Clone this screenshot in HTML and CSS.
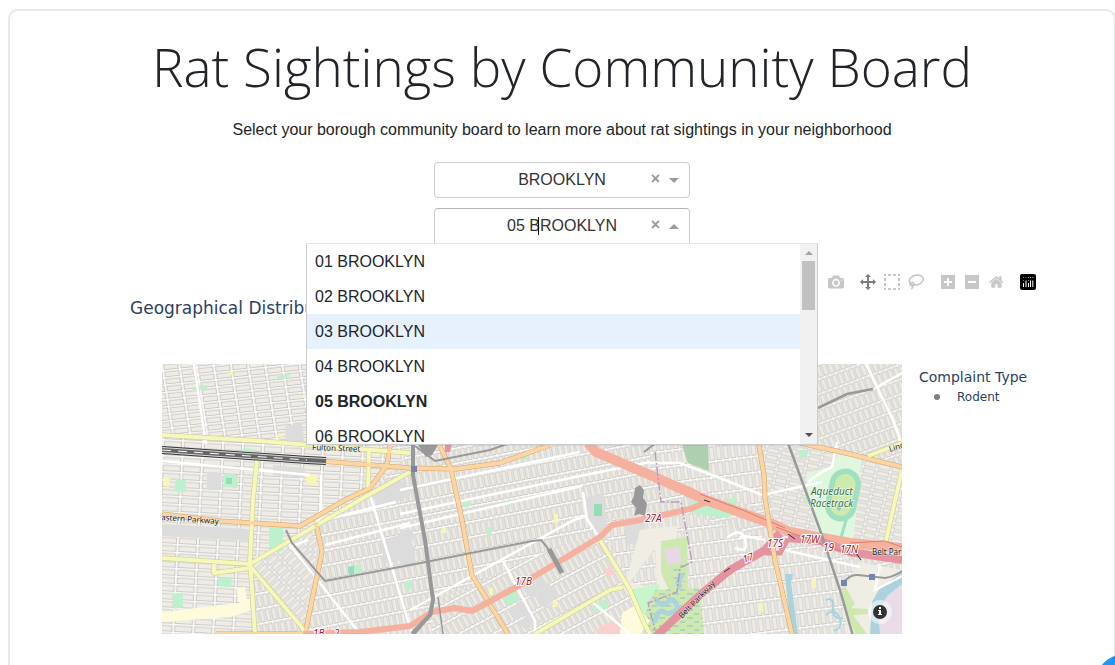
FILE: index.html
```html
<!DOCTYPE html>
<html lang="en">
<head>
<meta charset="utf-8">
<title>Rat Sightings by Community Board</title>
<link rel="stylesheet" href="styles.css">
</head>
<body>
<main class="card">
  <h1 class="title">Rat Sightings by Community Board</h1>
  <p class="intro">Select your borough community board to learn more about rat sightings in your neighborhood</p>

  <form class="filters">
    <div class="field">
      <select class="control" aria-label="Borough"><option>BROOKLYN</option></select>
      <button class="clear" type="button" aria-label="Clear borough">×</button>
      <span class="arrow arrow-down"></span>
    </div>
    <div class="field field-open">
      <input class="control" type="text" role="combobox" aria-expanded="true" aria-controls="boards" aria-label="Community board" value="05 BROOKLYN">
      <span class="caret"></span>
      <button class="clear" type="button" aria-label="Clear community board">×</button>
      <span class="arrow arrow-up"></span>
      <div class="menu">
        <ul class="options" id="boards" role="listbox">
          <li class="option" role="option">01 BROOKLYN</li>
          <li class="option" role="option">02 BROOKLYN</li>
          <li class="option option-focused" role="option">03 BROOKLYN</li>
          <li class="option" role="option">04 BROOKLYN</li>
          <li class="option option-selected" role="option" aria-selected="true">05 BROOKLYN</li>
          <li class="option" role="option">06 BROOKLYN</li>
        </ul>
        <div class="scrollbar">
          <span class="scroll-up"></span>
          <span class="thumb"></span>
          <span class="scroll-down"></span>
        </div>
      </div>
    </div>
  </form>

  <section class="chart">
    <div class="modebar">
      <div class="group">
        <button class="tool" aria-label="Download plot"><svg viewBox="0 0 1000 1000"><path transform="matrix(1 0 0 -1 0 850)" d="m500 450c-83 0-150-67-150-150 0-83 67-150 150-150 83 0 150 67 150 150 0 83-67 150-150 150z m400 150h-120c-16 0-34 13-39 29l-31 93c-6 15-23 28-40 28h-340c-16 0-34-13-39-28l-31-94c-6-15-23-28-40-28h-120c-55 0-100-45-100-100v-450c0-55 45-100 100-100h800c55 0 100 45 100 100v450c0 55-45 100-100 100z m-400-550c-138 0-250 112-250 250 0 138 112 250 250 250 138 0 250-112 250-250 0-138-112-250-250-250z m365 380c-19 0-35 16-35 35 0 19 16 35 35 35 19 0 35-16 35-35 0-19-16-35-35-35z"/></svg></button>
      </div>
      <div class="group">
        <button class="tool tool-active" aria-label="Pan"><svg viewBox="0 0 1000 1000"><path transform="matrix(1 0 0 -1 0 850)" d="m1000 350l-187 188 0-125-250 0 0 250 125 0-188 187-187-187 125 0 0-250-250 0 0 125-188-188 186-187 0 125 252 0 0-250-125 0 187-188 188 188-125 0 0 250 250 0 0-126 187 188z"/></svg></button>
        <button class="tool" aria-label="Box select"><svg viewBox="0 0 16 16"><path d="M0 0h2v2H0zM4 0h3v2H4zM9 0h3v2H9zM14 0h2v2h-2zM0 4h2v3H0zM14 4h2v3h-2zM0 9h2v3H0zM14 9h2v3h-2zM0 14h2v2H0zM4 14h3v2H4zM9 14h3v2H9zM14 14h2v2h-2z"/></svg></button>
        <button class="tool" aria-label="Lasso select"><svg viewBox="0 0 16 16"><g fill="none" stroke="#c7c7c7" stroke-width="1.6"><ellipse cx="8.300" cy="6" rx="7" ry="4.900" transform="rotate(-14 8.300 6)"/><ellipse cx="4" cy="10" rx="2" ry="1.700"/><path d="M4.700 11.500C5.300 13 4.500 14 3.300 14.800"/></g></svg></button>
      </div>
      <div class="group">
        <button class="tool" aria-label="Zoom in"><svg viewBox="0 0 875 1000"><path transform="matrix(1 0 0 -1 0 850)" d="m1 787l0-875 875 0 0 875-875 0z m687-500l-187 0 0-187-125 0 0 187-188 0 0 125 188 0 0 187 125 0 0-187 187 0 0-125z"/></svg></button>
        <button class="tool" aria-label="Zoom out"><svg viewBox="0 0 875 1000"><path transform="matrix(1 0 0 -1 0 850)" d="m0 788l0-876 875 0 0 876-875 0z m688-500l-500 0 0 125 500 0 0-125z"/></svg></button>
        <button class="tool" aria-label="Reset view"><svg viewBox="0 0 928 1000"><path transform="matrix(1 0 0 -1 0 850)" d="m786 296v-267q0-15-11-26t-25-10h-214v214h-143v-214h-214q-15 0-25 10t-11 26v267q0 1 0 2t0 2l321 264 321-264q1-1 1-4z m124 39l-34-41q-5-5-12-6h-2q-7 0-12 3l-386 322-386-322q-7-4-13-4-7 2-12 7l-35 41q-4 5-3 13t6 12l401 334q18 15 42 15t43-15l136-114v109q0 8 5 13t13 5h107q8 0 13-5t5-13v-227l122-102q5-5 6-12t-4-13z"/></svg></button>
      </div>
      <div class="group">
        <a class="tool" href="#" aria-label="Plotly"><svg viewBox="0 0 16 16"><rect width="16" height="16" rx="2" fill="#000"/><path d="M3 9h1v4H3zM5.500 6.500h1V13h-1zM8 9h1v4H8zM10 6.500h1V13h-1zM12.300 6.500h1V13h-1z" fill="#fff"/><path d="M3 3h1v1H3zM3 6h1v1H3zM5.500 3h1v1h-1z" fill="#ef4a81"/><path d="M8 3h1v1H8zM8 6h1v1H8z" fill="#b573b5"/><path d="M10 3h1v1h-1zM12.300 3h1v1h-1z" fill="#67c9dc"/></svg></a>
      </div>
    </div>
    <h2 class="chart-title">Geographical Distribution</h2>
    <div class="plot">
      <div class="map">
      <svg class="map-canvas" viewBox="162 364 740 270" role="img" aria-label="Street map of Brooklyn and Queens">
        <defs>
          <pattern id="gA" width="17" height="7.200" patternUnits="userSpaceOnUse" patternTransform="translate(162 364) rotate(-6) skewX(3)"><rect width="17" height="8" fill="#fff"/><rect x="1.200" y="1" width="14.500" height="5" class="block"/></pattern>
          <pattern id="gB" width="20" height="8" patternUnits="userSpaceOnUse" patternTransform="translate(162 464) rotate(3)"><rect width="20" height="8" fill="#fff"/><rect x="1.200" y="1" width="17.500" height="5.700" class="block"/></pattern>
          <pattern id="gC" width="6" height="15" patternUnits="userSpaceOnUse" patternTransform="translate(400 490) rotate(-11)"><rect width="6" height="15" fill="#fff"/><rect x=".8" y="1" width="4.200" height="12.500" class="block"/></pattern>
          <pattern id="gD" width="14" height="7" patternUnits="userSpaceOnUse" patternTransform="translate(250 566) rotate(-42)"><rect width="14" height="7" fill="#fff"/><rect x="1" y="1" width="12" height="5" class="block"/></pattern>
          <pattern id="gE" width="6" height="16" patternUnits="userSpaceOnUse" patternTransform="translate(470 610) rotate(-28)"><rect width="6" height="16" fill="#fff"/><rect x=".8" y="1" width="4.200" height="13.500" class="block"/></pattern>
          <pattern id="gF" width="6" height="14" patternUnits="userSpaceOnUse" patternTransform="translate(820 364) rotate(-20)"><rect width="6" height="14" fill="#fff"/><rect x=".8" y="1" width="4.200" height="11.800" class="block"/></pattern>
          <pattern id="gG" width="7" height="16" patternUnits="userSpaceOnUse" patternTransform="translate(700 560) rotate(-7)"><rect width="7" height="16" fill="#fff"/><rect x="1" y="1" width="5" height="13.500" class="block"/></pattern>
          <pattern id="gH" width="14" height="7" patternUnits="userSpaceOnUse" patternTransform="translate(860 480) rotate(12)"><rect width="14" height="7" fill="#fff"/><rect x="1" y="1" width="12" height="5" class="block"/></pattern>
          <pattern id="marsh" width="14" height="8" patternUnits="userSpaceOnUse"><rect width="14" height="8" fill="#cfe8b0"/><path d="M1 2h6M8 6h5" stroke="#7eb6ce" stroke-width=".8"/></pattern>
        </defs>

        <g class="streets">
          <rect x="162" y="364" width="740" height="270" fill="url(#gC)"/>
          <path d="M162 364H420V452L162 435Z" fill="url(#gA)"/>
          <path d="M162 435L410 453 365 497 250 565 255 634H162Z" fill="url(#gB)"/>
          <path d="M250 566L310 532 322 552 305 634Z" fill="url(#gD)"/>
          <path d="M438 600L560 545 600 535 635 590 650 634H430Z" fill="url(#gE)"/>
          <path d="M600 520L690 508 690 634H650L630 590Z" fill="url(#gG)"/>
          <path d="M650 445H760L765 510 650 475Z" fill="url(#gG)"/>
          <path d="M690 515L775 540 858 560V634H660Z" fill="url(#gG)"/>
          <path d="M780 364H902V470L760 430Z" fill="url(#gF)"/>
          <path d="M760 445L815 444 902 467V550L776 525Z" fill="url(#gH)"/>
        </g>

        <g class="areas">
          <path class="grey" d="M285 426l17-3 2 19-18-1zM273 465l32 3-1 10-31-3zM207 472l15 1-1 17-14-1zM162 524l86 5v12l-86-5zM372 494l28-14 10 8v8l-32 14zM381 540l30-8v26l-27 6zM400 530h13v11h-13zM400 546h15v19h-15zM583 498l20-5 5 37-10 3-12-19zM518 584l20-10 12 12-20 11zM535 597l14-11 12 10-17 12zM508 612l12-12 13 7-15 13zM518 623l12-11 12 10-16 8zM624 520l20-3v24l-18 4z"/>
          <path fill="#f0ede5" d="M640 530l37-4v65l-17 25-35-30zM655 548l-25 34 28 8z"/>
          <path fill="#fdfbdc" d="M162 612l76-9 12-4v12l-20 6-68 5zM237 588l8-1 2 14-9 1z"/>
          <path class="green" d="M269 527h14v24l-14 2zM243 448l14 2-2 4-13-2zM224 474l14 1-1 13-14-1zM193 387l14-2v4l-14 2zM277 376l12-2v3l-12 2zM176 479l10 1v12l-12-1zM218 578l14-1-1 10-13-1zM172 594l11-1v14l-9 2zM350 566l11-2 2 8-12 2zM502 596l15-6 2 10-12 6zM462 503l6-2 2 5-6 2zM505 502h5v6h-5zM523 453h5v7h-5zM592 605l14-6 3 9-13 5zM487 528l4-1v9h-4zM799 450h8v8h-8zM728 500l8-5v12h-8zM690 495l20 5 30 13-12 5-34-4zM406 581h6v8h-6zM803 497h6v5h-6z"/>
          <path fill="#aecfb0" d="M682 445h26l1 26-21-8z"/>
          <path fill="#fad0cc" d="M604 570l9-4 1 8-7 3zM600 626l20-7v15h-24zM192 371l5-1v3h-5z"/>
          <path fill="#f8f5b8" d="M306 474l12 1-2 11-10-4zM163 477l7 1-1 9-6-1zM227 373l6-1v3h-6zM275 435l8-1v3h-8zM554 514h4v9h-4zM489 588h4v7h-4zM553 600h4v7h-4zM442 528h4v5h-4zM302 395h6v3h-6zM812 579h4v9h-4zM759 603h4v9h-4z"/>
          <path fill="#93ddb8" d="M594 504h8v12h-8zM348 567l6-1v8l-5 1zM226 478h6v6h-6z"/>
          <path fill="#e0f7df" d="M806 473l26-6 6-13 24 4-9 86h-16l-17-6-11-32z"/>
          <path fill="#c9f5cd" d="M629 590l30-6 6 50h-14z"/>
          <path fill="#cfe8b0" d="M661 541l26-4 1 55-17 3-10-22z"/>
          <path fill="#e8d8e6" d="M664 550l14-4 4 16-14 4zM650 597l8 3-5 9-6-4z"/>
          <path fill="url(#marsh)" d="M655 590l45-2 4 46h-54l-5-20zM672 565l14-3v20h-12z"/>
          <path d="M656 600q6 8 12 2t10 6q-8 8-14 4t-9 10M683 574q-8 8-2 14" fill="none" stroke="#abd3de" stroke-width="5"/>
          <path fill="#fdfbdc" d="M622 613l14-8 14 16-10 13h-20z"/>
          <path fill="#f0ede5" d="M858 562l44 8v64h-54l-5-40z"/>
          <path fill="#cfe8b0" d="M845 586l10 18-4 4 17 1v5l-15 1 14 19h-12l-14-40z"/>
          <path fill="#abd3de" d="M902 572l-22 16-8 14-2 32h32z"/>
          <path fill="#e8dce8" d="M902 584l-15 12-9 17 2 21h22z"/>
          <path d="M785 574h8l-2 8 7 52h-7z" fill="#abd3de"/>
          <path d="M826 600q8-4 7 8t10 10M826 615q8-8 13 2t-5 14" fill="none" stroke="#abd3de" stroke-width="2"/>
          <rect x="830" y="471" width="26" height="48" rx="13" transform="rotate(12 843 495)" fill="#cfeaae" stroke="#a0dfc0" stroke-width="5.500"/>
          <path d="M847 517l-7 24" stroke="#a0dfc0" stroke-width="3"/>
          <ellipse cx="839" cy="508" rx="2" ry="3" fill="#9cc6cb"/>
          <path fill="#999" d="M635 488l5-3 4 5-1 8 4 5-2 13-6-2-5 2 2-8-5-6 3-6zM418 445h20l-6 10-6 2z"/>
        </g>

        <g class="minor">
          <path d="M162 461l148 14M194 364l12 80M318 364v80M321 475v44M400 490l180-38M400 514l180-38 70-14M400 528l182-42M583 492l4 27 13 20M410 610l100-55 64-35 12-4M503 561l32 60v13M286 540l74 94M292 546l16-6M325 545l85-22M370 495l42 139M316 522l80-20M650 463l30 0 40 15 42 17 60-13M808 482q12-10 24-15l5-25M866 364l27 56 9 25M875 388l27-15M727 538q14-12 18 2t-10 8M752 538q-10-4-12 0M765 540l-20-4M880 566l-5 24 27-14M780 549l80 18M590 600l40 34"/>
        </g>

        <g class="casing">
          <path class="yellow-edge" d="M162 435L260 441 410 453M257 460L253 500 250 560 255 634M410 472L365 497 250 564 162 558M214 564v9l36-5M250 566L300 625 306 634M369 450L368 490M600 540L630 590 645 625 650 634M535 634L610 590 623 587M868 456L902 443M902 470L885 545"/>
          <path class="orange-edge" d="M162 514L220 521 300 526 345 500 370 488 387 465 390 446M307 460L410 468 455 469 500 463 550 445M316 523L322 552 305 634M437 440L451 469 462 520 472 575 508 634M758 440L764 475 765 498 775 560 792 634M800 443L850 454 902 467M216 634h92"/>
        </g>
        <g class="roads">
          <path class="yellow" d="M162 435L260 441 410 453M257 460L253 500 250 560 255 634M410 472L365 497 250 564 162 558M214 564v9l36-5M250 566L300 625 306 634M369 450L368 490M600 540L630 590 645 625 650 634M535 634L610 590 623 587M868 456L902 443M902 470L885 545"/>
          <path class="orange" d="M162 514L220 521 300 526 345 500 370 488 387 465 390 446M307 460L410 468 455 469 500 463 550 445M316 523L322 552 305 634M437 440L451 469 462 520 472 575 508 634M800 443L850 454 902 467M216 634h92"/>
          <path d="M445 444h7l-2 8h-5z" fill="#e592a1"/>
          <path d="M303 634L360 632 410 626 432 612 455 608 472 611 515 588 600 537 612 525 640 520 690 509 712 500" class="salmon"/>
          <path d="M588 443L596 452 650 475 706 500 770 523 790 532 850 543 902 548" class="salmon wide"/>
          <path d="M640 470L690 490 708 500" class="salmon"/>
          <path d="M654 638L700 595 730 570 765 550 780 533" class="pink"/>
          <path d="M788 538L820 541 850 552 902 560" class="pink"/>
          <path d="M765 553l15 0 8-14" class="pink thin"/>
          <path d="M776 527l40 15 36 13M850 543l35-2 17 6M700 494l45 17 40 17" fill="none" stroke="#e07d69"/>
          <path d="M758 440L764 475 765 498 775 560 792 634" class="orange"/>
          <path d="M704 500l6 2M788 534l7 5M856 553l5 7M724 572l6-4" stroke="#333"/>
        </g>

        <g class="rails">
          <path d="M162 450L307 460 326 461" stroke="#333" stroke-width="8"/>
          <path d="M162 450L307 460 326 461" stroke="#ddd" stroke-width="6"/>
          <path d="M162 450L307 460 326 461" stroke="#666" stroke-width="4"/>
          <path d="M162 450L307 460" stroke="#fff" stroke-width="1" stroke-dasharray="9 7"/>
          <path d="M286 530L292 543 325 581 410 565 532 541 541 540 547 547 552 556" stroke-width="2"/>
          <path d="M549 549L562 573" stroke-width="5"/>
          <path d="M413 440L413 475 425 540 433 600 430 615 412 634" stroke="#888" stroke-width="4"/>
          <path d="M434 595L432 614 415 634M438 597L443 634" stroke="#777" stroke-width="1.500"/>
          <path d="M415 446L435 461 490 450 510 443" stroke-width="2"/>
          <path d="M788 443L820 530 840 590 853 636" stroke-width="2.500"/>
          <path d="M818 408L847 394 873 389" stroke-width="2.500"/>
          <path d="M843 583Q850 574 858 575L885 578Q896 576 902 571" stroke="#555" stroke-width="2"/>
          <path d="M655 452L661 502 681 502 692 562 680 568 677 592 648 603 655 630" stroke="#b99dbb" stroke-width="1.500" stroke-dasharray="9 2 2 2"/>
          <path d="M644 452l12-9" stroke-width="2"/>
        </g>
        <path fill="#7584b5" d="M411 466h6v6h-6zM841 580h6v6h-6zM869 574h6v6h-6z"/>

        <g class="map-text">
          <text x="312" y="450" transform="rotate(2 312 450)">Fulton Street</text>
          <text x="161" y="520" transform="rotate(4 161 520)">astern Parkway</text>
          <text x="682" y="619" transform="rotate(-46 682 619)">Belt Parkway</text>
          <text x="872" y="555">Belt Parkway</text>
          <text x="890" y="452" transform="rotate(-18 890 452)">Linden</text>
        </g>
        <g class="shield">
          <text x="645" y="522">27A</text><text x="515" y="585">17B</text><text x="313" y="637">1B</text><text x="334" y="637">2</text>
          <text x="744" y="563" transform="rotate(-20 744 563)">17</text><text x="767" y="547">17S</text><text x="800" y="543">17W</text><text x="823" y="551">19</text><text x="840" y="553">17N</text>
        </g>
        <g class="park"><text x="811" y="495">Aqueduct</text><text x="810" y="507">Racetrack</text></g>
      </svg>
      <button class="info" aria-label="Map attribution"><svg viewBox="0 0 24 24"><circle cx="12" cy="12" r="12" fill="#fff" fill-opacity=".5"/><circle cx="12" cy="12" r="7" fill="#333"/><path d="M11 7h2v2h-2zM10 10h3v4h1v1h-4v-1h1v-3h-1z" fill="#fff"/></svg></button>
      </div>
      <aside class="legend">
        <h3 class="legend-title">Complaint Type</h3>
        <div class="legend-item"><span class="dot"></span>Rodent</div>
      </aside>
    </div>
  </section>
</main>
<button class="fab" aria-label="Open debug menu"></button>
</body>
</html>
```
FILE: styles.css
```css
* { box-sizing: border-box; }
body {
  margin: 0;
  overflow: hidden;
  background: #fff;
  color: #212529;
  font: 16px/24px "Liberation Sans", Arial, sans-serif;
}
h1, h2, h3, p, ul { margin: 0; padding: 0; font-weight: 400; }
button { border: 0; padding: 0; background: none; }
.card {
  margin: 9px -1px 0 8px;
  min-height: 100vh;
  padding: 24px 0 32px;
  border: 2px solid #e9e9e9;
  border-radius: 10px;
}
.title {
  font: 200 53px/64px "Open Sans", "Noto Sans", sans-serif;
  text-align: center;
}
.intro { margin-top: 19px; text-align: center; }
.filters {
  display: flex;
  flex-direction: column;
  align-items: center;
  gap: 10px;
  margin-top: 20px;
}
.field { position: relative; width: 256px; }
.control {
  display: block;
  width: 100%;
  height: 36px;
  padding: 0 10px;
  border: 1px solid #ccc;
  border-radius: 4px;
  background: #fff;
  color: #333;
  font: inherit;
  text-align: center;
  text-align-last: center;
  appearance: none;
  outline: 0;
}
.field-open .control { border-color: #b3b3b3 #ccc #ccc; border-radius: 4px 4px 0 0; }
.clear {
  position: absolute;
  top: 8px;
  right: 26px;
  width: 17px;
  color: #999;
  font: 700 16px/18px "Liberation Sans", Arial, sans-serif;
}
.arrow {
  position: absolute;
  top: 16px;
  right: 11px;
  border: 5px solid transparent;
}
.arrow-down { border-top-color: #999; border-bottom-width: 0; }
.arrow-up { border-bottom-color: #999; border-top-width: 0; }
.caret {
  position: absolute;
  top: 9px;
  left: 104px;
  width: 1px;
  height: 18px;
  background: #000;
}
.menu {
  position: absolute;
  z-index: 2;
  top: 35px;
  left: -50%;
  display: flex;
  width: 200%;
  height: 202px;
  overflow: hidden;
  border: 1px solid #ccc;
  border-top-color: #e6e6e6;
  background: #fff;
  box-shadow: 0 1px 0 rgba(0, 0, 0, .06);
}
.options { flex: 1; list-style: none; }
.option { height: 35px; padding: 0 8px; line-height: 35px; }
.option-focused { background: #e7f1fd; }
.option-selected { font-weight: 700; }
.scrollbar {
  display: flex;
  flex-direction: column;
  align-items: center;
  width: 17px;
  padding: 7px 0;
  background: #f1f1f1;
}
.scroll-up { border: 4px solid transparent; border-top: 0; border-bottom-color: #a3a3a3; }
.scroll-down { margin-top: auto; border: 4px solid transparent; border-bottom: 0; border-top-color: #505050; }
.thumb { width: 13px; height: 49px; margin-top: 6px; background: #c1c1c1; }
.chart { margin-top: 26px; padding: 0 72px 0 120px; }
.modebar { display: flex; justify-content: flex-end; height: 24px; padding-right: 2px; }
.group { display: flex; margin-left: 8px; }
.tool {
  display: flex;
  align-items: center;
  justify-content: center;
  width: 24px;
  height: 24px;
  fill: #c7c7c7;
}
.tool svg { height: 16px; }
.tool-active { fill: #7c7c7c; }
.chart-title {
  margin-top: 2px;
  color: #2a3f5f;
  font: 17px/24px "DejaVu Sans", Verdana, sans-serif;
}
.plot { display: flex; gap: 17px; margin-top: 44px; padding-left: 32px; }
.map { position: relative; flex: 1; }
.map-canvas { display: block; width: 100%; overflow: hidden; }
.info { position: absolute; right: 10px; bottom: 10px; width: 24px; height: 24px; }
.info svg { display: block; }
.legend { width: 123px; color: #2a3f5f; font: 12px/20px "DejaVu Sans", Verdana, sans-serif; }
.legend-title { margin-top: 3px; font: 14px/20px "DejaVu Sans", Verdana, sans-serif; white-space: nowrap; }
.legend-item { display: flex; align-items: center; gap: 17px; padding-left: 15px; }
.dot { width: 6px; height: 6px; border-radius: 50%; background: #808080; }
.fab {
  position: fixed;
  right: -40px;
  bottom: -49px;
  width: 60px;
  height: 60px;
  border-radius: 50%;
  background: #2196f3;
}

.block { fill: #efece5; stroke: #bfbcb8; stroke-width: .8; }
.grey { fill: #dddcdc; }
.green { fill: #bdf0cd; }
.minor path { fill: none; stroke: #fff; stroke-width: 2.5; }
.casing path, .roads .yellow, .roads .orange { fill: none; stroke-linejoin: round; }
.yellow-edge { stroke: #c8cb8c; stroke-width: 5; }
.orange-edge { stroke: #d3a467; stroke-width: 5; }
.yellow { stroke: #f6f8bb; stroke-width: 4; }
.orange { stroke: #fbd5a3; stroke-width: 4; }
.salmon { fill: none; stroke: #f5b19e; stroke-width: 6; stroke-linejoin: round; }
.wide { stroke-width: 10; }
.pink { fill: none; stroke: #e592a1; stroke-width: 8; }
.thin { stroke-width: 5; }
.rails path { fill: none; stroke: #999; }
.rails path[stroke="#333"] { stroke: #333; }
.rails path[stroke="#ddd"] { stroke: #ddd; }
.rails path[stroke="#666"] { stroke: #666; }
.rails path[stroke="#fff"] { stroke: #fff; }
.rails path[stroke="#b99dbb"] { stroke: #b99dbb; }
.map-text text { fill: #222; stroke: #fff; stroke-opacity: .6; stroke-width: 1px; paint-order: stroke; font: 8px "Noto Sans", sans-serif; }
.shield text { fill: #a02030; stroke: #fff; stroke-width: 2px; paint-order: stroke; font: italic 10px "Noto Sans", sans-serif; }
.park text { fill: #2a7347; stroke: #fff; stroke-width: 1px; paint-order: stroke; font: italic 10px "Noto Sans", sans-serif; }
```
